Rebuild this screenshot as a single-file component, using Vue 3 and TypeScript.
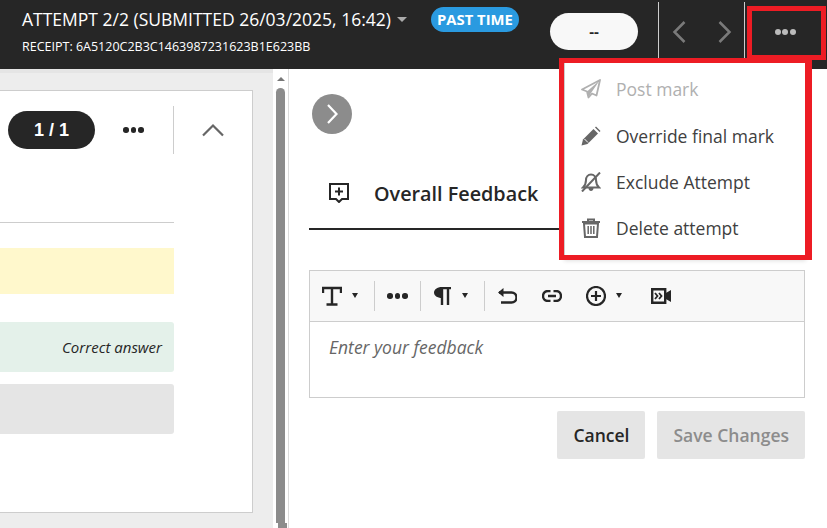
<script setup lang="ts">
const menu = [
  { label: 'Post mark', icon: 'send', disabled: true },
  { label: 'Override final mark', icon: 'pencil', disabled: false },
  { label: 'Exclude Attempt', icon: 'bell', disabled: false },
  { label: 'Delete attempt', icon: 'trash', disabled: false },
]
</script>

<template>
  <div class="page">
    <header class="top">
      <div class="titles">
        <div class="title-row">
          <span class="title">ATTEMPT 2/2 (SUBMITTED 26/03/2025, 16:42)</span>
          <span class="caret"></span>
          <span class="badge">PAST TIME</span>
        </div>
        <div class="receipt">RECEIPT: 6A5120C2B3C1463987231623B1E623BB</div>
      </div>
      <div class="grade">--</div>
      <div class="nav">
        <svg width="16" height="24" viewBox="0 0 16 24"><path d="M13.500 2 3.500 12l10 10" fill="none" stroke="#7a7a7a" stroke-width="2.500"/></svg>
        <svg width="16" height="24" viewBox="0 0 16 24"><path d="M2.500 2l10 10-10 10" fill="none" stroke="#7a7a7a" stroke-width="2.500"/></svg>
      </div>
      <div class="more">
        <span></span><span></span><span></span>
      </div>
    </header>

    <main class="body">
      <section class="left">
        <div class="left-strip"></div>
        <div class="card">
          <div class="card-top">
            <div class="counter">1 / 1</div>
            <div class="dots"><span></span><span></span><span></span></div>
            <div class="collapse">
              <svg width="22" height="14" viewBox="0 0 22 14"><path d="M1 12.500 11 2.500l10 10" fill="none" stroke="#666" stroke-width="2.200"/></svg>
            </div>
          </div>
          <div class="rule"></div>
          <div class="answer yellow"></div>
          <div class="answer green"><em>Correct answer</em></div>
          <div class="answer grey"></div>
        </div>
      </section>

      <div class="scroll">
        <span class="arrow-up"></span>
        <span class="thumb"></span>
        <span class="thumb-end"></span>
      </div>

      <section class="right">
        <button class="round" type="button" aria-label="Collapse">
          <svg width="14" height="22" viewBox="0 0 14 22"><path d="M3 2l8.500 9L3 20" fill="none" stroke="#fff" stroke-width="2.200"/></svg>
        </button>
        <div class="tab">
          <svg class="tab-icon" width="20" height="20" viewBox="0 0 20 20">
            <path d="M1 1h18v15h-6l-3 3-3-3H1z" fill="none" stroke="#262626" stroke-width="2"/>
            <path d="M10 4.500v8M6 8.500h8" stroke="#262626" stroke-width="2"/>
          </svg>
          <span>Overall Feedback</span>
        </div>

        <div class="editor">
          <div class="toolbar">
            <svg width="20" height="20" viewBox="0 0 20 20"><path d="M1 7V2h18v5M10 2v16M4.500 18.500h11" fill="none" stroke="#262626" stroke-width="2.400"/></svg>
            <span class="mini mini-t"></span>
            <i class="sep sep-a"></i>
            <div class="dots tool-dots"><span></span><span></span><span></span></div>
            <i class="sep sep-b"></i>
            <svg class="tool-pil" width="17" height="18" viewBox="0 0 17 18"><path d="M7 1h10M8 1v17M14 1v17" fill="none" stroke="#262626" stroke-width="2.400"/><path d="M8 0C3 0 0 2.500 0 5.500S3 11 8 11z" fill="#262626"/></svg>
            <span class="mini mini-p"></span>
            <i class="sep sep-c"></i>
            <svg class="tool-undo" width="20" height="16" viewBox="0 0 20 16"><path d="M2 4.500h12.500a5 5 0 0 1 0 10H4" fill="none" stroke="#262626" stroke-width="2.400"/><path d="M6.500 0 1 4.500 6.500 9" fill="#262626"/></svg>
            <svg class="tool-link" width="20" height="12" viewBox="0 0 20 12"><path d="M8.500 1H6a5 5 0 0 0 0 10h2.500M11.500 1H14a5 5 0 0 1 0 10h-2.500M6 6h8" fill="none" stroke="#262626" stroke-width="2.400"/></svg>
            <svg class="tool-plus" width="20" height="20" viewBox="0 0 20 20"><circle cx="10" cy="10" r="9" fill="none" stroke="#262626" stroke-width="2.200"/><path d="M10 5v10M5 10h10" stroke="#262626" stroke-width="2.200"/></svg>
            <span class="mini mini-q"></span>
            <svg class="tool-video" width="20" height="16" viewBox="0 0 20 16"><path d="M1.200 1.200h13v13.600h-13z" fill="none" stroke="#262626" stroke-width="2.400"/><path d="M14 5.500 20 2v12l-6-3.500z" fill="#262626"/><path d="M4 5l2.500 3L4 11M8 5l2.500 3L8 11" fill="none" stroke="#262626" stroke-width="1.800"/></svg>
          </div>
          <div class="input"><em>Enter your feedback</em></div>
        </div>

        <div class="actions">
          <button class="btn" type="button">Cancel</button>
          <button class="btn off" type="button">Save Changes</button>
        </div>
      </section>
    </main>

    <div class="menu">
      <div v-for="m in menu" :key="m.label" class="item" :class="{ disabled: m.disabled }">
        <svg v-if="m.icon === 'send'" width="20" height="20" viewBox="0 0 20 20"><path d="M19 1 1 10.500l5 2 1.500 6L11 14.500l4.500 2z" fill="none" stroke="currentColor" stroke-width="1.800" stroke-linejoin="round"/><path d="M19 1 6 12.500l1.500 6L10 14z" fill="currentColor"/></svg>
        <svg v-else-if="m.icon === 'pencil'" width="20" height="20" viewBox="0 0 20 20"><path d="M0.500 19.500l1.500-6L12.500 3l4.500 4.500L6.500 18z" fill="currentColor"/><path d="M14 1.500l1-1 4.500 4.500-1 1z" fill="currentColor"/><path d="M3.500 13l3.500 3.500" stroke="#fff" stroke-width="1"/></svg>
        <svg v-else-if="m.icon === 'bell'" width="20" height="20" viewBox="0 0 20 20"><path d="M10 2.500C7 2.500 5 5 5 8c0 3.500-1 5.500-3 7.500h16c-2-2-3-4-3-7.500 0-3-2-5.500-5-5.500z" fill="none" stroke="currentColor" stroke-width="2"/><path d="M7.500 16c0 4 5 4 5 0" fill="currentColor"/><path d="M1 19.500 19 .5" stroke="currentColor" stroke-width="2"/></svg>
        <svg v-else width="20" height="20" viewBox="0 0 20 20"><path d="M1 4h18M7 4V1.500h6V4" fill="none" stroke="currentColor" stroke-width="2"/><path d="M3 5.500h14l-1 13.500H4z" fill="none" stroke="currentColor" stroke-width="2"/><path d="M7.200 8v8M10 8v8M12.800 8v8" stroke="currentColor" stroke-width="1.500"/></svg>
        <span>{{ m.label }}</span>
      </div>
    </div>

    <div class="frame frame-more"></div>
    <div class="frame frame-menu"></div>
  </div>
</template>

<style>
body { margin: 0; background: #fff; overflow: hidden; }
</style>

<style scoped>
.page {
  position: relative;
  width: 827px;
  height: 528px;
  overflow: hidden;
  font-family: "Open Sans", sans-serif;
  color: #262626;
  background: #fff;
}
.top {
  display: flex;
  align-items: flex-start;
  height: 69px;
  background: #262626;
  color: #fff;
}
.titles { width: 550px; padding: 7px 0 0 22px; box-sizing: border-box; }
.title-row { display: flex; align-items: center; height: 24px; }
.title { font-size: 17.500px; line-height: 24px; white-space: nowrap; }
.caret {
  margin-left: 6px;
  border-left: 5px solid transparent;
  border-right: 5px solid transparent;
  border-top: 5px solid #aaa;
}
.badge {
  margin-left: 24px;
  width: 88px;
  height: 25px;
  border-radius: 13px;
  background: #2a9ae0;
  font-size: 14.800px;
  font-weight: 700;
  line-height: 25px;
  text-align: center;
}
.receipt { margin-top: 8px; font-size: 12.500px; line-height: 16px; white-space: nowrap; }
.grade {
  width: 88px;
  height: 37px;
  margin-top: 13px;
  border-radius: 19px;
  background: #f8f8f8;
  color: #262626;
  font-size: 15px;
  font-weight: 700;
  line-height: 37px;
  text-align: center;
}
.nav {
  display: flex;
  align-items: center;
  justify-content: center;
  gap: 30px;
  box-sizing: border-box;
  width: 87px;
  height: 56px;
  margin: 2px 0 0 20px;
  padding-top: 4px;
  border-left: 1px solid #cdcdcd;
  border-right: 1px solid #cdcdcd;
}
.more {
  display: flex;
  align-items: center;
  justify-content: center;
  gap: 1.500px;
  flex: 1;
  height: 64px;
  padding-right: 2px;
}
.more span { width: 6px; height: 6px; border-radius: 50%; background: #bbb; }
.body { display: flex; height: 459px; }
.left {
  flex: none;
  width: 273px;
  background: #ededed;
  display: flex;
  flex-direction: column;
}
.left-strip { height: 4px; background: #e5e5e5; }
.card {
  box-sizing: border-box;
  width: 253px;
  height: 423px;
  margin-top: 17px;
  background: #fff;
  border: 1px solid #cdcdcd;
  border-left: 0;
}
.card-top { display: flex; align-items: center; height: 78px; }
.counter {
  width: 88px;
  height: 38px;
  margin-left: 8px;
  border-radius: 19px;
  background: #262626;
  color: #fff;
  font-family: "Liberation Sans", sans-serif;
  font-size: 18px;
  font-weight: 700;
  line-height: 38px;
  text-align: center;
}
.dots { display: flex; align-items: center; gap: 2px; }
.dots span { width: 5.500px; height: 5.500px; border-radius: 50%; background: #262626; }
.card-top .dots { margin-left: 28px; }
.collapse {
  display: flex;
  align-items: center;
  justify-content: center;
  width: 80px;
  height: 48px;
  margin-left: 29px;
  box-sizing: border-box;
  border-left: 1px solid #cdcdcd;
}
.rule { width: 174px; height: 1px; margin-top: 53px; background: #cdcdcd; }
.answer { width: 174px; box-sizing: border-box; }
.yellow { height: 46px; margin-top: 25px; background: #fff8cc; }
.green {
  height: 50px;
  margin-top: 28px;
  border-radius: 0 3px 3px 0;
  background: #e4f1ea;
  padding-right: 12px;
  text-align: right;
  font-size: 15px;
  line-height: 51px;
  color: #262626;
}
.grey { height: 50px; margin-top: 12px; border-radius: 0 3px 3px 0; background: #e5e5e5; }
.scroll {
  flex: none;
  box-sizing: border-box;
  width: 16px;
  background: #fff;
  border-right: 1px solid #dcdcdc;
  display: flex;
  flex-direction: column;
  align-items: flex-start;
  padding-left: 3px;
}
.arrow-up {
  margin: 8px 0 0 0.500px;
  border-left: 4px solid transparent;
  border-right: 4px solid transparent;
  border-bottom: 4px solid #777;
}
.thumb { width: 9px; flex: 1; margin-top: 7px; border-radius: 5px 5px 0 0; background: #8c8c8c; }
.thumb-end { width: 9px; height: 5px; margin-left: 2px; background: #8c8c8c; }
.right { flex: 1; padding: 25px 22px 0 20px; min-width: 0; }
.round {
  display: flex;
  align-items: center;
  justify-content: center;
  width: 40px;
  height: 40px;
  padding: 0;
  margin: 0 0 0 3px;
  border: 0;
  border-radius: 50%;
  background: #8c8c8c;
}
.tab {
  display: flex;
  align-items: center;
  box-sizing: content-box;
  height: 52px;
  margin-top: 33px;
  padding: 0 0 9px 20px;
  border-bottom: 2px solid #262626;
  font-size: 19.800px;
  font-weight: 600;
  white-space: nowrap;
}
.tab-icon { margin-right: 25px; }
.editor { margin-top: 40px; border: 1px solid #cdcdcd; }
.toolbar {
  display: flex;
  align-items: center;
  height: 50px;
  padding-left: 12px;
  background: #f8f8f8;
  border-bottom: 1px solid #cdcdcd;
}
.sep { flex: none; width: 1px; height: 30px; background: #cdcdcd; }
.sep-a { margin-left: 16px; }
.sep-b { margin-left: 12.500px; }
.sep-c { margin-left: 16px; }
.mini {
  margin-top: -1px;
  border-left: 3px solid transparent;
  border-right: 3px solid transparent;
  border-top: 5px solid #262626;
}
.mini-t { margin-left: 10px; }
.mini-p { margin-left: 11px; }
.mini-q { margin-left: 10px; }
.tool-dots { margin-left: 12px; }
.tool-pil { margin-left: 13px; }
.tool-undo { margin-left: 12px; }
.tool-link { margin-left: 25px; }
.tool-plus { margin-left: 24px; }
.tool-video { margin-left: 29px; }
.input { height: 75px; padding: 13px 19px; box-sizing: border-box; font-size: 17.500px; line-height: 24px; color: #666; }
.actions { display: flex; justify-content: flex-end; gap: 12px; margin-top: 13px; }
.btn {
  height: 48px;
  padding: 0 16px;
  border: 0;
  border-radius: 2px;
  background: #e5e5e5;
  color: #262626;
  font: 600 17.500px "Open Sans", sans-serif;
}
.off { color: #8c8c8c; }
.menu {
  position: absolute;
  left: 564px;
  top: 60px;
  box-sizing: border-box;
  width: 242px;
  height: 198px;
  padding-top: 7px;
  background: #fff;
  border-left: 1px solid #cdcdcd;
  border-right: 1px solid #cdcdcd;
  box-shadow: 0 3px 4px rgba(0, 0, 0, 0.12);
}
.item {
  display: flex;
  align-items: center;
  height: 46px;
  padding-left: 16px;
  gap: 15px;
  font-size: 17.500px;
  color: #404040;
}
.item:first-child { height: 48px; margin-top: -2px; }
.item svg { color: #666; }
.item.disabled, .item.disabled svg { color: #b0b0b0; }
.frame { position: absolute; box-sizing: border-box; border: 5px solid #ed1c24; }
.frame-more { left: 747px; top: 6px; width: 79px; height: 54px; }
.frame-menu { left: 559px; top: 58px; width: 253px; height: 202px; border-right-width: 7px; }
</style>
